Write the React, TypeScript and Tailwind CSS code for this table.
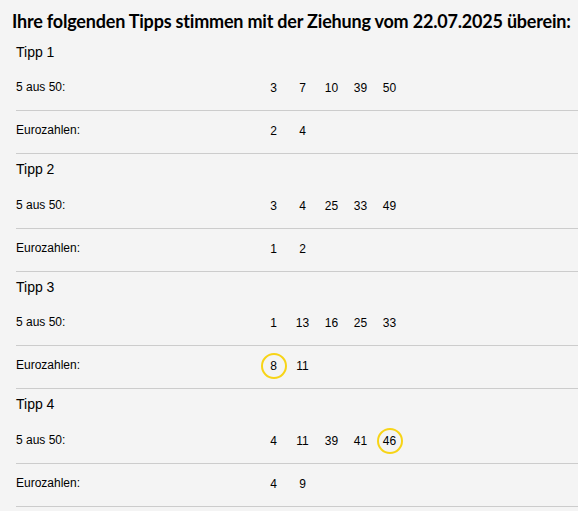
const TIPPS: { main: number[]; euro: number[]; hitMain: number[]; hitEuro: number[] }[] = [
  { main: [3, 7, 10, 39, 50], euro: [2, 4], hitMain: [], hitEuro: [] },
  { main: [3, 4, 25, 33, 49], euro: [1, 2], hitMain: [], hitEuro: [] },
  { main: [1, 13, 16, 25, 33], euro: [8, 11], hitMain: [], hitEuro: [8] },
  { main: [4, 11, 39, 41, 46], euro: [4, 9], hitMain: [46], hitEuro: [] },
];

function NumberRow({ label, numbers, hits }: { label: string; numbers: number[]; hits: number[] }) {
  return (
    <div className="flex h-[43px] items-start border-b border-[#cccccc] pt-[7px]">
      <div className="mt-[5px] w-[243px] shrink-0 text-[12px] leading-[14px]">{label}</div>
      <div className="flex">
        {numbers.map((n) => (
          <div key={n} className="flex h-[26px] w-[29px] items-center justify-center">
            <span
              className={
                hits.includes(n)
                  ? 'flex h-[26px] w-[26px] items-center justify-center rounded-full border-2 border-[#f7d417] text-[12px] leading-[14px]'
                  : 'text-[12px] leading-[14px]'
              }
            >
              {n}
            </span>
          </div>
        ))}
      </div>
    </div>
  );
}

export default function App() {
  return (
    <div className="h-[511px] w-[578px] overflow-hidden bg-[#f4f4f4] text-black [font-family:'Liberation_Sans',Arial,sans-serif]">
      <div className="h-[36.5px] whitespace-nowrap pl-[12px] pt-[10px] text-[18px] font-bold leading-[22px] tracking-[-0.2px] [font-family:Lato,sans-serif]">
        Ihre folgenden Tipps stimmen mit der Ziehung vom 22.07.2025 überein:
      </div>
      <div className="pl-[16px]">
        {TIPPS.map((t, i) => (
          <div key={i}>
            <div className="h-[31.5px] pt-[7px] text-[14px] leading-[16px]">Tipp {i + 1}</div>
            <NumberRow label="5 aus 50:" numbers={t.main} hits={t.hitMain} />
            <NumberRow label="Eurozahlen:" numbers={t.euro} hits={t.hitEuro} />
          </div>
        ))}
      </div>
    </div>
  );
}
